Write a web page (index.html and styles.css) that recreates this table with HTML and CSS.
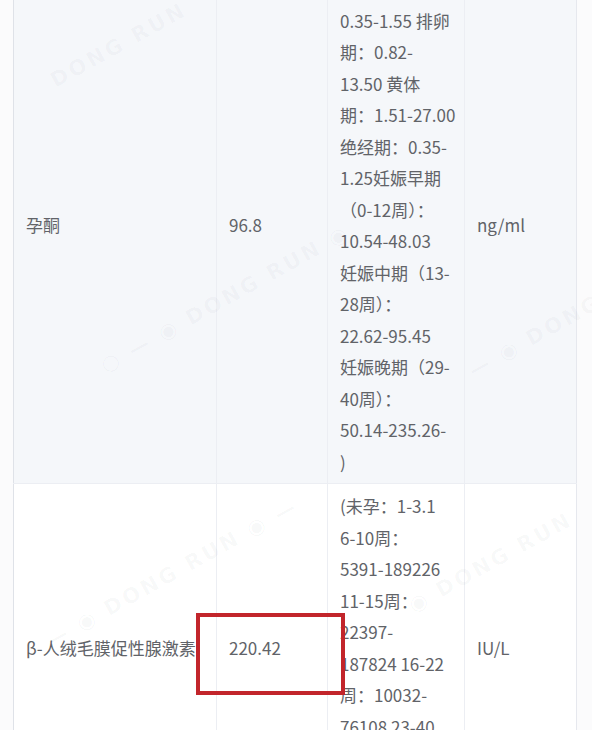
FILE: index.html
```html
<!DOCTYPE html>
<html lang="zh-CN">
<head>
<meta charset="UTF-8">
<meta name="viewport" content="width=device-width, initial-scale=1.0">
<title>检验报告</title>
<link rel="stylesheet" href="styles.css">
</head>
<body>
<div class="page">
    <table class="report">
        <colgroup>
            <col class="col-name">
            <col class="col-value">
            <col class="col-range">
            <col class="col-unit">
        </colgroup>
        <tr class="row-striped">
            <td>孕酮</td>
            <td>96.8</td>
            <td class="range">卵泡期：<br>0.35-1.55 排卵<br>期：0.82-<br>13.50 黄体<br>期：1.51-27.00<br>绝经期：0.35-<br>1.25妊娠早期<br>（0-12周）：<br>10.54-48.03<br>妊娠中期（13-<br>28周）：<br>22.62-95.45<br>妊娠晚期（29-<br>40周）：<br>50.14-235.26-<br>)</td>
            <td>ng/ml</td>
        </tr>
        <tr class="row-tall">
            <td>β-人绒毛膜促性腺激素</td>
            <td>220.42</td>
            <td class="range">(未孕：1-3.1<br>6-10周：<br>5391-189226<br>11-15周：<br>22397-<br>187824 16-22<br>周：10032-<br>76108 23-40<br>周：4060-<br>165400)</td>
            <td>IU/L</td>
        </tr>
    </table>

    <!-- faint watermark stamped over the photo -->
    <span class="watermark wm-1">DONG RUN</span>
    <span class="watermark wm-2">○ — ◉ DONG RUN ◉</span>
    <span class="watermark wm-3">— ◉ DONG RUN ◉ —</span>
    <span class="watermark wm-4">◉ DONG RUN</span>
    <span class="watermark wm-5">— ◉ DONG</span>

    <!-- red highlight drawn over the value -->
    <div class="highlight"></div>
</div>
</body>
</html>
```

FILE: styles.css
```css
html, body {
    margin: 0;
    padding: 0;
}

body {
    background-color: #fbfbfc;
    font-family: "Noto Sans CJK SC", "Noto Sans", sans-serif;
    color: #616368;
    overflow: hidden;
}

.page {
    position: relative;
    height: 730px;
    padding-left: 13px;
    padding-right: 16px;
    overflow: hidden;
}

.report {
    width: 563px;
    margin-top: -33px;
    border-collapse: collapse;
    table-layout: fixed;
    border-left: 1px solid #dfe2e8;
    border-right: 1px solid #e6e8ee;
    background-color: #fff;
}

.col-name { width: 203px; }
.col-value { width: 111px; }
.col-range { width: 137px; }
.col-unit { width: 112px; }

.report td {
    padding: 6px 12px;
    font-size: 17px;
    line-height: 31.5px;
    vertical-align: middle;
    white-space: nowrap;
    border-right: 1px solid #eceef3;
    border-bottom: 1px solid #eceef3;
}

.report td:last-child {
    border-right: none;
}

.row-striped td {
    background-color: #f5f7fa;
}

.row-tall td {
    padding-bottom: 13px;
}

.watermark {
    position: absolute;
    font-family: "DejaVu Sans", sans-serif;
    font-weight: bold;
    font-size: 21px;
    letter-spacing: 3px;
    color: rgba(60, 70, 90, 0.035);
    transform: rotate(-29deg);
    transform-origin: left center;
    pointer-events: none;
    white-space: nowrap;
}

.wm-1 { left: 52px; top: 70px; }
.wm-2 { left: 102px; top: 355px; }
.wm-3 { left: 48px; top: 630px; }
.wm-4 { left: 410px; top: 595px; }
.wm-5 { left: 470px; top: 360px; }

.highlight {
    position: absolute;
    left: 196px;
    top: 613px;
    width: 141px;
    height: 74px;
    border: 4.5px solid #c2252b;
}
```
